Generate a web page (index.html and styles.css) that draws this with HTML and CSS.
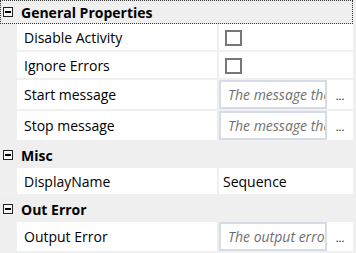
FILE: index.html
```html
<!DOCTYPE html>
<html lang="en">

<head>
    <meta charset="UTF-8" />
    <title>Properties</title>
    <link rel="stylesheet" href="styles.css">
</head>

<body>
    <div class="grid">
        <div class="category focused">
            <span class="toggle"></span>
            <span class="category-name">General Properties</span>
        </div>
        <div class="prop">
            <div class="name">Disable Activity</div>
            <div class="value"><span class="check"></span></div>
        </div>
        <div class="prop">
            <div class="name">Ignore Errors</div>
            <div class="value"><span class="check"></span></div>
        </div>
        <div class="prop tall">
            <div class="name">Start message</div>
            <div class="value">
                <div class="textbox">The message that</div>
                <div class="dots">...</div>
            </div>
        </div>
        <div class="prop tall">
            <div class="name">Stop message</div>
            <div class="value">
                <div class="textbox">The message that</div>
                <div class="dots">...</div>
            </div>
        </div>
        <div class="category">
            <span class="toggle"></span>
            <span class="category-name">Misc</span>
        </div>
        <div class="prop">
            <div class="name">DisplayName</div>
            <div class="value plain">Sequence</div>
        </div>
        <div class="category">
            <span class="toggle"></span>
            <span class="category-name">Out Error</span>
        </div>
        <div class="prop tall">
            <div class="name">Output Error</div>
            <div class="value">
                <div class="textbox">The output error</div>
                <div class="dots">...</div>
            </div>
        </div>
    </div>
</body>

</html>
```

FILE: styles.css
```css
* {
    box-sizing: border-box;
    margin: 0;
    padding: 0;
}

body {
    font-family: 'Open Sans', 'Noto Sans', sans-serif;
    font-size: 14px;
    color: #000;
    background: #f0f0f0;
    width: 356px;
    height: 253px;
    overflow: hidden;
}

.grid {
    width: 353px;
    background: #f0f0f0;
}

.category {
    display: flex;
    align-items: center;
    height: 26px;
    background: #efefef;
    padding-left: 3px;
}

.category.focused {
    height: 24px;
    border: 1px dotted #333;
}

.category.focused .toggle {
    margin-left: -1px;
}

.toggle {
    position: relative;
    width: 10px;
    height: 10px;
    border: 1px solid #222;
    background: #f7f7f7;
    margin-right: 8px;
}

.toggle::after {
    content: '';
    position: absolute;
    left: 1px;
    right: 1px;
    top: 3px;
    height: 2px;
    background: #000;
}

.category-name {
    font-weight: 700;
    font-size: 14px;
}

.prop {
    display: flex;
    height: 28px;
    margin-left: 17px;
    border-bottom: 2px solid #f0f0f0;
}

.prop.tall {
    height: 31px;
}

.name {
    width: 201px;
    background: #fff;
    display: flex;
    align-items: center;
    padding-left: 7px;
    border-right: 1px solid #ececec;
}

.value {
    flex: 1;
    background: #fff;
    display: flex;
    align-items: center;
    margin-left: 1px;
}

.value.plain {
    padding-left: 4px;
}

.check {
    width: 17px;
    height: 16px;
    border: 2px solid #777;
    margin-left: 6px;
    margin-top: 2px;
}

.textbox {
    width: 108px;
    height: 29px;
    align-self: flex-start;
    border: 2px solid #d5dbe8;
    padding-left: 7px;
    font-style: italic;
    color: #707070;
    line-height: 25px;
    white-space: nowrap;
    overflow: hidden;
}

.dots {
    flex: 1;
    align-self: stretch;
    text-align: center;
    font-size: 11px;
    line-height: 32px;
}
```
